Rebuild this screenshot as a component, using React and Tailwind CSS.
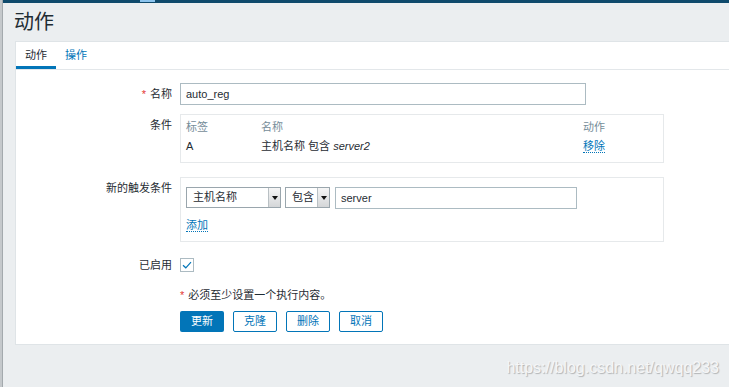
const font = { fontFamily: '"Liberation Sans", "Noto Sans CJK SC", sans-serif' };

const Select = ({ value, width }) => (
  <div className={`flex h-[21px] items-stretch border border-[#9aa6ad] bg-white ${width}`}>
    <div className="flex flex-1 items-center pl-[6px] text-[11px] text-[#1f2c33]">{value}</div>
    <div className="flex w-[12px] items-center justify-center border-l border-[#b9c0c4] bg-gradient-to-b from-[#f6f6f6] to-[#d4d6d8]">
      <span className="block h-0 w-0 border-x-[3px] border-t-[4px] border-x-transparent border-t-[#111]" />
    </div>
  </div>
);

const Label = ({ children, required }) => (
  <div className="w-[156px] shrink-0 text-right text-[11px] leading-[22px] text-[#1f2c33]">
    {required && <span className="mr-[4px] text-[#e33734]">*</span>}
    {children}
  </div>
);

const App = () => {
  const buttons = ["克隆", "删除", "取消"];

  return (
    <div className="flex h-[387px] w-[729px] overflow-hidden bg-[#ebeef0]" style={font}>
      {/* left edge of the window behind */}
      <div className="w-[3px] shrink-0 border-r border-[#a3a9ad] bg-[#c4c8cb]" />

      <div className="flex min-w-0 flex-1 flex-col">
        <div className="relative h-[3px] bg-[#0f4a6c]">
          <div className="absolute left-[137px] top-0 h-[2px] w-[15px] bg-[#8cc4ee]" />
        </div>

        <div className="flex h-[38px] items-center pl-[11px] text-[20px] text-[#1f2c33]">动作</div>

        <div className="ml-[12px] border-y border-l border-[#dfe4e7] bg-white">
          {/* tabs */}
          <div className="flex h-[28px] border-b border-[#e3e7ea] text-[11px]">
            <div className="flex items-center border-b-[3px] border-[#0275b8] px-[9px] pt-[3px] text-[#1f2c33]">动作</div>
            <div className="flex items-center px-[9px] text-[#0275b8]">操作</div>
          </div>

          <div className="pb-[12px] pt-[13px]">
            {/* name */}
            <div className="flex gap-[8px]">
              <Label required>名称</Label>
              <div className="flex h-[22px] w-[406px] items-center border border-[#acbbc2] px-[5px] text-[11px] text-[#1f2c33]">
                auto_reg
              </div>
            </div>

            {/* conditions */}
            <div className="mt-[9px] flex gap-[8px]">
              <Label>条件</Label>
              <div className="w-[484px] border border-[#e6e9eb] pb-[8px] pl-[5px] pt-[5px] text-[11px] leading-[15px]">
                <div className="grid grid-cols-[75px_322px_1fr] text-[#768d99]">
                  <span>标签</span>
                  <span>名称</span>
                  <span>动作</span>
                </div>
                <div className="mt-[4px] grid grid-cols-[75px_322px_1fr] text-[#1f2c33]">
                  <span>A</span>
                  <span>
                    主机名称 包含 <i>server2</i>
                  </span>
                  <span>
                    <span className="border-b border-dotted border-[#0275b8] text-[#0275b8]">移除</span>
                  </span>
                </div>
              </div>
            </div>

            {/* new condition */}
            <div className="mt-[14px] flex gap-[8px]">
              <Label>新的触发条件</Label>
              <div className="w-[484px] border border-[#e6e9eb] pb-[8px] pl-[5px] pt-[9px]">
                <div className="flex gap-[4px]">
                  <Select value="主机名称" width="w-[95px]" />
                  <Select value="包含" width="w-[45px]" />
                  <div className="ml-[1px] flex h-[22px] w-[242px] items-center border border-[#acbbc2] px-[5px] text-[11px] text-[#1f2c33]">
                    server
                  </div>
                </div>
                <div className="mt-[8px] text-[11px] leading-[16px]">
                  <span className="border-b border-dotted border-[#0275b8] text-[#0275b8]">添加</span>
                </div>
              </div>
            </div>

            {/* enabled */}
            <div className="mt-[12px] flex items-center gap-[8px]">
              <Label>已启用</Label>
              <div className="flex h-[14px] w-[14px] items-center justify-center border border-[#acbbc2]">
                <svg width="10" height="8" viewBox="0 0 10 8" fill="none">
                  <path d="M1 4.2 L3.8 6.8 L9 1.2" stroke="#0275b8" strokeWidth="1.2" />
                </svg>
              </div>
            </div>

            <div className="ml-[164px] mt-[11px] text-[11px] leading-[16px] text-[#1f2c33]">
              <span className="mr-[4px] text-[#e33734]">*</span>必须至少设置一个执行内容。
            </div>

            <div className="ml-[164px] mt-[8px] flex gap-[9px] text-[11px]">
              <button className="h-[21px] w-[44px] rounded-[2px] bg-[#0275b8] text-white">更新</button>
              {buttons.map((b) => (
                <button key={b} className="h-[21px] w-[44px] rounded-[2px] border border-[#0275b8] bg-white text-[#0275b8]">
                  {b}
                </button>
              ))}
            </div>
          </div>
        </div>

        <div className="mt-[14px] flex justify-end pr-[10px]">
          <span className="text-[16px] leading-[18px] text-[#f5f6f7] [text-shadow:1px_1px_1px_rgba(0,0,0,0.25)]">
            https://blog.csdn.net/qwqq233
          </span>
        </div>
      </div>
    </div>
  );
};

export default App;
